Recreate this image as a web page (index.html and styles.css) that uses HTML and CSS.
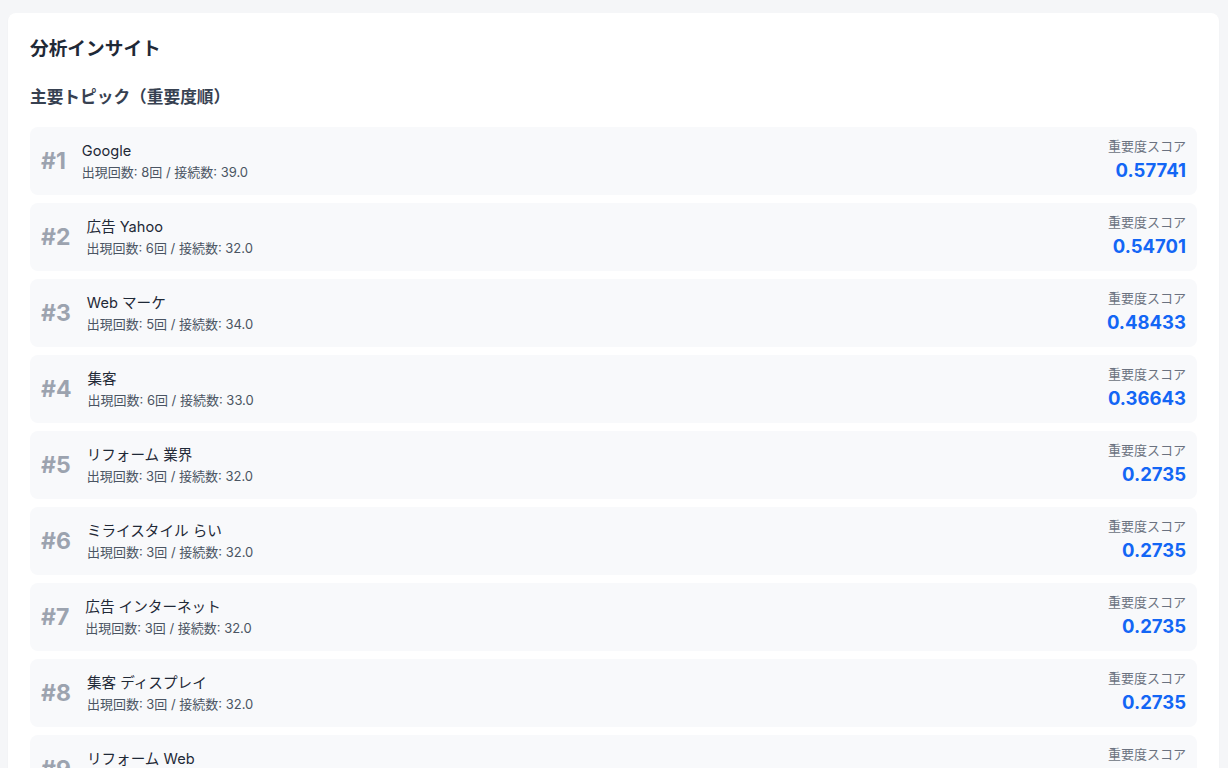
FILE: index.html
```html
<!DOCTYPE html>
<html lang="ja">
<head>
<meta charset="UTF-8">
<meta name="viewport" content="width=device-width, initial-scale=1.0">
<title>分析インサイト</title>
<link rel="stylesheet" href="styles.css">
</head>
<body>
<div class="card">
  <h2 class="title">分析インサイト</h2>
  <h3 class="subtitle">主要トピック（重要度順）</h3>
  <div class="topics" id="topics"></div>
</div>

<script>
const topics = [
  { name: 'Google', count: 8, links: '39.0', score: '0.57741' },
  { name: '広告 Yahoo', count: 6, links: '32.0', score: '0.54701' },
  { name: 'Web マーケ', count: 5, links: '34.0', score: '0.48433' },
  { name: '集客', count: 6, links: '33.0', score: '0.36643' },
  { name: 'リフォーム 業界', count: 3, links: '32.0', score: '0.2735' },
  { name: 'ミライスタイル らい', count: 3, links: '32.0', score: '0.2735' },
  { name: '広告 インターネット', count: 3, links: '32.0', score: '0.2735' },
  { name: '集客 ディスプレイ', count: 3, links: '32.0', score: '0.2735' },
  { name: 'リフォーム Web', count: 3, links: '32.0', score: '0.2735' }
];

const list = document.getElementById('topics');
topics.forEach((t, i) => {
  list.innerHTML += `<div class="topic">
    <div class="rank">#${i + 1}</div>
    <div class="info"><div class="name">${t.name}</div><div class="meta">出現回数: ${t.count}回 / 接続数: ${t.links}</div></div>
    <div class="score"><div class="score-label">重要度スコア</div><div class="score-value">${t.score}</div></div>
  </div>`;
});
</script>
</body>
</html>
```

FILE: styles.css
```css
body { margin: 0; padding: 13px 9px 0 8px; background: #f5f6f8; color: #1f2937; font-family: Inter, "Noto Sans CJK JP", sans-serif; }
.card { background: #fff; border-radius: 8px; padding: 22px 22px 20px; box-shadow: 0 1px 2px rgba(0,0,0,0.04); }
.title { font-size: 18.7px; line-height: 28px; font-weight: 700; margin: 0 0 22px; color: #1f2937; }
.subtitle { font-size: 16.7px; line-height: 24px; font-weight: 700; margin: 0 0 18px; color: #374151; }
.topics { display: flex; flex-direction: column; gap: 8px; }
.topic { display: flex; align-items: center; background: #f8f9fb; border-radius: 8px; padding: 11px 11px 11px 11px; }
.rank { font-size: 23px; font-weight: 700; color: #9ca3af; margin-right: 16px; }
.info { flex: 1; }
.name { font-size: 14.6px; line-height: 20px; color: #1f2937; }
.meta { font-size: 13px; line-height: 18px; color: #4b5563; margin-top: 2px; }
.score { text-align: right; }
.score-label { font-size: 13px; line-height: 16px; color: #6b7280; }
.score-value { font-size: 18.5px; line-height: 28px; font-weight: 700; color: #1366f5; margin-top: 2px; }
```
